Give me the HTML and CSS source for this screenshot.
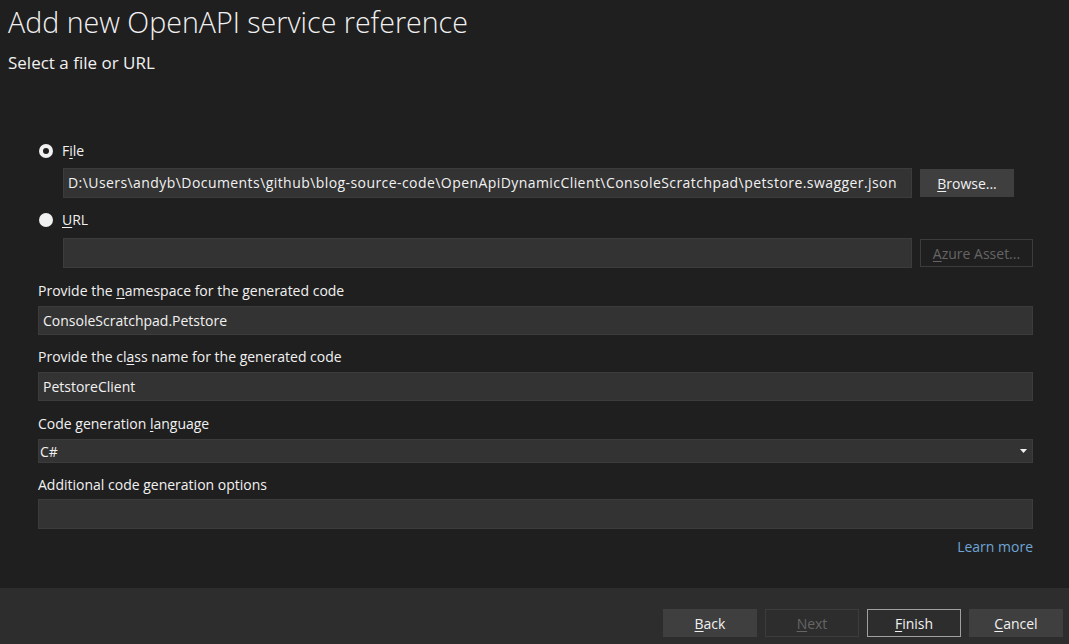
FILE: index.html
```html
<!DOCTYPE html>
<html lang="en">
<head>
<meta charset="utf-8">
<title>Add new OpenAPI service reference</title>
<link rel="stylesheet" href="styles.css">
</head>
<body>
<div class="page">
  <header class="head">
    <h1 class="title">Add new OpenAPI service reference</h1>
    <p class="subtitle">Select a file or URL</p>
  </header>
  <main class="form">
    <label class="radio-row radio-file">
      <span class="radio radio-on"></span>
      <span>F<u>i</u>le</span>
    </label>
    <div class="path-row path-file">
      <div class="input input-path">D:\Users\andyb\Documents\github\blog-source-code\OpenApiDynamicClient\ConsoleScratchpad\petstore.swagger.json</div>
      <button class="btn btn-browse"><u>B</u>rowse...</button>
    </div>
    <label class="radio-row radio-url">
      <span class="radio radio-off"></span>
      <span><u>U</u>RL</span>
    </label>
    <div class="path-row path-url">
      <div class="input"></div>
      <button class="btn btn-disabled btn-azure"><u>A</u>zure Asset...</button>
    </div>

    <div class="field-label lbl-ns">Provide the <u>n</u>amespace for the generated code</div>
    <div class="input full">ConsoleScratchpad.Petstore</div>

    <div class="field-label lbl-cls">Provide the cl<u>a</u>ss name for the generated code</div>
    <div class="input full">PetstoreClient</div>

    <div class="field-label lbl-lang">Code generation <u>l</u>anguage</div>
    <div class="select">
      <span>C#</span>
      <svg class="caret" width="7" height="4" viewBox="0 0 7 4"><path d="M0 0 H7 L3.5 4 Z" fill="#f1f1f1"/></svg>
    </div>

    <div class="field-label lbl-opt">Additional code <u>g</u>eneration options</div>
    <div class="input full input-opt"></div>

    <div class="learn-row"><a class="learn" href="#">Learn more</a></div>
  </main>
  <footer class="foot">
    <button class="btn"><u>B</u>ack</button>
    <button class="btn btn-disabled"><u>N</u>ext</button>
    <button class="btn btn-default"><u>F</u>inish</button>
    <button class="btn"><u>C</u>ancel</button>
  </footer>
</div>
</body>
</html>
```
FILE: styles.css
```css
* { box-sizing: border-box; }
html, body {
  margin: 0;
  padding: 0;
  background: #1f1f1f;
  color: #f1f1f1;
  font-family: "Open Sans", "Noto Sans", sans-serif;
  font-size: 14px;
}
u { text-decoration: underline; text-underline-offset: 2px; text-decoration-thickness: 1px; }

.page {
  display: flex;
  flex-direction: column;
  height: 644px;
  overflow: hidden;
}

.head { padding: 0 8px; }
.title {
  margin: 2px 0 0;
  font-size: 28.6px;
  font-weight: 300;
  line-height: 40px;
  letter-spacing: 0;
}
.subtitle {
  margin: 9px 0 0;
  font-size: 17px;
  line-height: 24px;
  font-weight: 400;
}

.form {
  flex: 1;
  display: flex;
  flex-direction: column;
  padding: 66px 36px 0 38px;
}

.radio-row {
  display: flex;
  align-items: center;
  height: 20px;
  line-height: 20px;
  gap: 9px;
  padding-left: 1px;
}
.radio-url { margin-top: 12px; }
.radio {
  width: 14px;
  height: 14px;
  border-radius: 50%;
  background: #f1f1f1;
  position: relative;
  flex: none;
}
.radio-on::after {
  content: "";
  position: absolute;
  left: 4px; top: 4px;
  width: 6px; height: 6px;
  border-radius: 50%;
  background: #1f1f1f;
}

.path-row {
  display: grid;
  grid-template-columns: 1fr 113px;
  column-gap: 8px;
  margin-left: 25px;
}
.path-file { margin-top: 7px; }
.path-url { margin-top: 8px; }

.input {
  height: 30px;
  background: #333333;
  border: 1px solid #3c3c3c;
  padding: 0 4px;
  line-height: 28px;
  white-space: nowrap;
  overflow: hidden;
}
.input-path { letter-spacing: 0.43px; }
.input.full { height: 29px; line-height: 27px; margin-top: 5px; }
.input-opt { height: 30px !important; margin-top: 4px !important; }

.btn {
  height: 28px;
  width: 94px;
  background: #3f3f3f;
  border: 1px solid #3f3f3f;
  color: #f1f1f1;
  font-family: inherit;
  font-size: 14px;
  padding: 1px 0 0;
  line-height: 26px;
}
.btn-browse { align-self: center; }
.btn-azure { width: 113px; align-self: center; }
.btn-disabled {
  background: transparent;
  border-color: #3c3c3c;
  color: #656565;
}
.btn-default {
  background: #2d2d2d;
  border-color: #a0a0a0;
}

.field-label { height: 20px; line-height: 20px; }
.lbl-ns { margin-top: 13px; }
.lbl-cls { margin-top: 12px; }
.lbl-lang { margin-top: 13px; }
.lbl-opt { margin-top: 12px; }

.select {
  margin-top: 5px;
  height: 24px;
  background: #333333;
  border: 1px solid #3c3c3c;
  display: flex;
  align-items: center;
  justify-content: space-between;
  padding: 0 5px 0 1px;
}

.learn-row {
  display: flex;
  justify-content: flex-end;
  margin-top: 8px;
  height: 20px;
  line-height: 20px;
}
.learn { color: #6ea5d6; text-decoration: none; }

.foot {
  height: 56px;
  flex: none;
  background: #2d2d2d;
  display: flex;
  justify-content: flex-end;
  align-items: flex-start;
  gap: 8px;
  padding: 21px 6px 0 0;
}
```
